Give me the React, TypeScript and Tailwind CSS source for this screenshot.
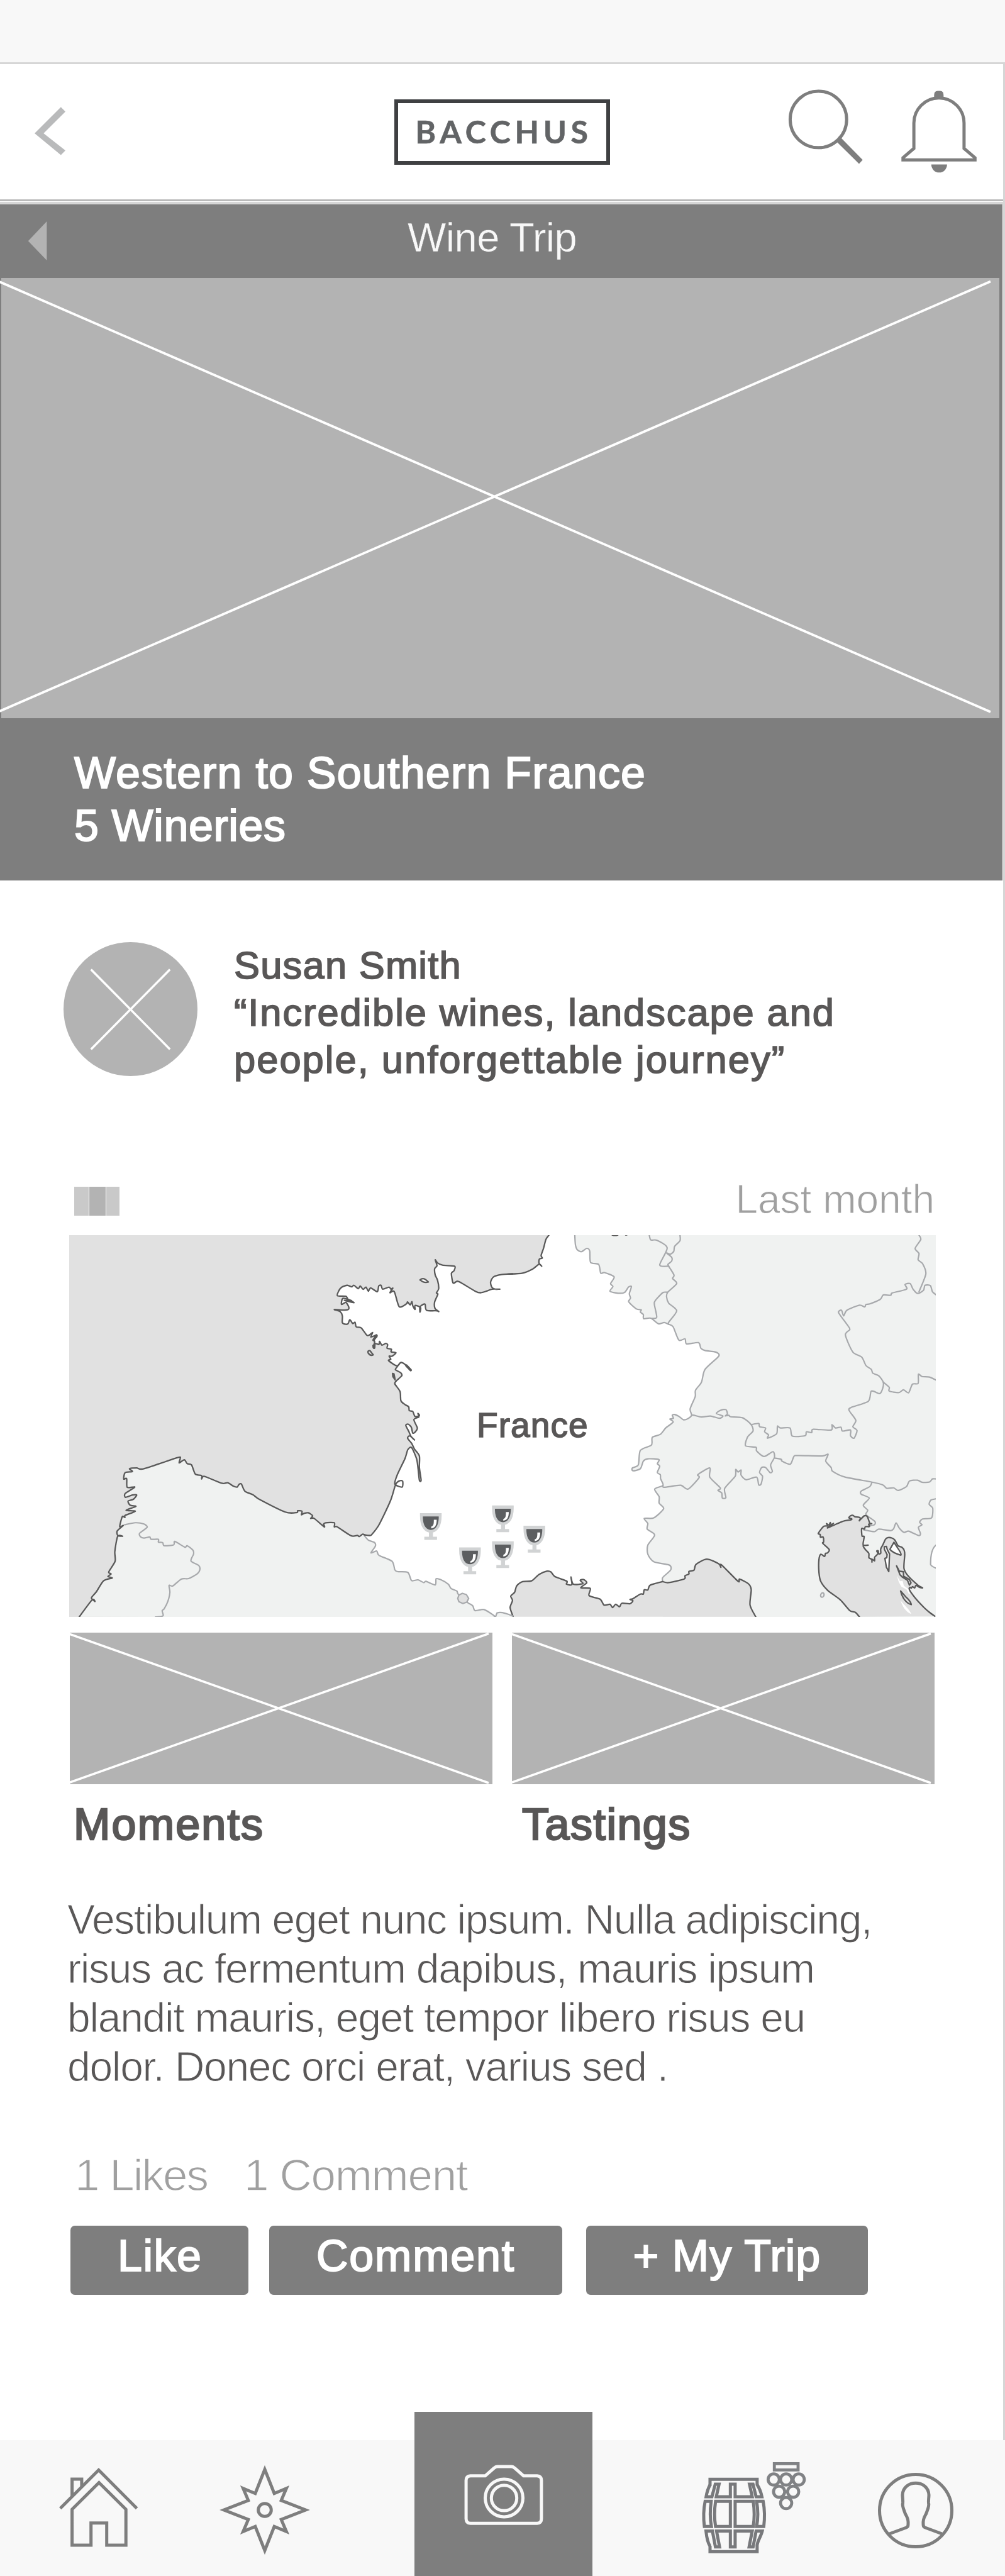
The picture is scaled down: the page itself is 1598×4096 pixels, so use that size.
import React from "react";

type Pts = string;

function parse(points: Pts): number[][] {
  return points
    .trim()
    .split(/\s+/)
    .map((p) => p.split(",").map(Number));
}

// Turns a list of points into a softly rounded path.
function curve(points: Pts, start = "M"): string {
  const p = parse(points);
  const t = 0.13;
  let d = `${start}${p[0][0]} ${p[0][1]}`;
  for (let i = 0; i < p.length - 1; i++) {
    const a = p[Math.max(i - 1, 0)];
    const b = p[i];
    const c = p[i + 1];
    const e = p[Math.min(i + 2, p.length - 1)];
    d += `C${(b[0] + (c[0] - a[0]) * t).toFixed(1)} ${(b[1] + (c[1] - a[1]) * t).toFixed(1)} ${(c[0] - (e[0] - b[0]) * t).toFixed(1)} ${(c[1] - (e[1] - b[1]) * t).toFixed(1)} ${c[0]} ${c[1]}`;
  }
  return d;
}

const ATLANTIC_FRANCE =
  "1568,180 1530,183 1502,192 1492,212 1496,232 1508,240 1524,240 1497,240 1480,247 1458,254 1440,249 1390,215 1376,209 1362,216 1356,178 1365,168 1367,150 1325,146 1308,137 1300,125 1306,148 1298,160 1300,185 1308,205 1312,238 1304,255 1309,260 1298,290 1299,315 1312,328 1306,325 1270,323 1265,300 1258,300 1247,310 1247,330 1249,312 1230,304 1230,320 1222,305 1219,289 1213,302 1204,290 1200,298 1175,309 1158,250 1143,254 1153,236 1146,240 1140,232 1118,240 1112,225 1104,228 1099,250 1076,235 1068,248 1060,232 1050,241 1040,228 1033,238 1018,225 1010,231 995,225 975,233 965,248 961,266 990,268 998,280 1018,293 985,284 1010,285 980,276 975,300 990,292 1000,310 998,320 980,322 950,320 970,328 978,345 978,372 990,378 998,375 1004,360 1014,375 1022,370 1026,388 1043,392 1062,420 1070,421 1083,410 1077,428 1096,420 1097,428 1087,437 1090,448 1085,468 1090,470 1092,454 1105,457 1107,445 1115,460 1128,453 1135,458 1133,472 1148,476 1147,486 1164,490 1150,503 1140,503 1146,515 1138,520 1160,538 1170,540 1182,528 1198,538 1215,558 1195,535 1180,528 1168,545 1162,556 1180,568 1184,580 1165,600 1160,612 1178,642 1181,678 1195,693 1208,702 1210,717 1222,720 1230,740 1245,736 1240,728 1243,742 1226,752 1238,785 1231,800 1222,805 1217,782 1206,770 1198,775 1208,798 1216,818 1228,832 1212,816 1204,825 1218,845 1228,868 1245,895 1245,940 1251,990 1245,990 1240,940 1235,905 1218,862 1205,870 1195,905 1168,970 1160,1005 1185,1017 1187,994 1177,992 1163,1006 1145,1070 1105,1165 1080,1203 1072,1207 1054,1204";
const BAY_SPAIN =
  "1054,1204 1048,1202 1037,1211 1030,1207 1008,1208 960,1173 950,1173 950,1157 920,1157 913,1162 915,1173 880,1140 868,1140 875,1130 860,1118 845,1120 836,1126 838,1112 823,1110 820,1117 780,1115 690,1065 668,1047 640,1033 628,1005 620,1006 613,1017 600,1013 580,1000 560,1002 500,975 490,985 490,972 468,966 455,930 440,925 430,910 412,922 416,903 405,902 290,945 265,942 240,945 250,956 225,960 220,985 230,984 232,1018 258,1017 225,1042 226,1057 250,1048 265,1048 253,1065 235,1072 242,1088 262,1093 228,1108 260,1112 225,1128 224,1136 215,1133 206,1172 218,1168 197,1190 200,1208 216,1210 199,1210 189,1270 190,1308 168,1350 176,1358 165,1368 180,1374 150,1385 125,1428 108,1452 120,1466 110,1460 66,1526";
const PYRENEES =
  "1054,1207 1068,1225 1090,1235 1092,1250 1077,1275 1097,1268 1105,1285 1150,1308 1160,1342 1170,1349 1205,1352 1218,1384 1240,1381 1260,1392 1268,1387 1300,1401 1303,1377 1318,1380 1345,1398 1355,1415 1375,1425 1380,1438 1412,1470 1430,1483 1438,1502 1470,1498 1510,1526";
const PORTUGAL =
  "222,1165 260,1157 290,1162 301,1175 275,1198 278,1212 290,1217 310,1213 315,1222 340,1222 340,1233 355,1235 360,1247 393,1244 397,1230 432,1253 440,1247 460,1265 462,1280 453,1307 480,1325 484,1340 475,1357 445,1376 420,1378 390,1405 377,1403 380,1430 373,1465 360,1495 353,1502 357,1520 350,1525 330,1527";
const CHANNEL =
  "198,28 188,45 180,80 172,108 176,118 166,122 165,138 174,150 165,142 145,160 110,177 60,181";
const EAST_BORDER =
  "285,28 287,65 293,85 307,93 325,80 335,90 338,135 365,143 372,177 385,175 417,192 405,218 413,230 403,248 430,256 452,253 465,232 475,230 468,258 472,275 466,290 492,318 508,321 505,330 515,340 516,356 540,354 566,376 585,371 600,378 615,388 634,440 655,435 660,455 700,450 708,472 722,481 758,487 768,503 722,555 710,605 690,637 689,662 672,710 677,735 665,748 650,753 635,740 620,732 612,735 616,747 604,750 615,762 590,785 572,810 545,822 542,852 505,873 498,930 478,942 480,953 505,945 515,915 530,906 567,909 562,925 570,935 562,960 572,968 573,985 581,1010 553,1025 568,1055 568,1080 583,1102 550,1138 518,1140 530,1160 528,1182 553,1205 530,1245 530,1280 550,1310 600,1322 608,1332 605,1345 580,1372 580,1388";
const MED =
  "580,1388 538,1402 530,1421 518,1420 515,1437 505,1437 480,1455 470,1458 480,1463 470,1475 443,1473 435,1487 422,1477 412,1490 403,1477 383,1480 370,1457 333,1443 337,1415 305,1412 325,1393 315,1380 303,1383 312,1396 280,1398 272,1370 275,1400 257,1398 258,1386 218,1368 205,1350 192,1347 165,1360 140,1385 110,1388 90,1405 83,1430 70,1445 76,1462 68,1490 78,1526";
const LIGURIA =
  "580,1388 600,1392 652,1378 655,1365 668,1358 668,1348 685,1343 692,1320 728,1300 768,1318 775,1332 777,1322 833,1387 838,1378 868,1397 877,1420 873,1480 892,1526";
const BORDERS = [
  "677,735 685,735 710,742 740,738 770,747 782,738 760,728 775,715 792,713 797,730 790,738 802,735 808,741 848,745 877,772 883,797 865,820 858,855 893,861 895,875 920,897 950,878 955,900 942,930 948,955 940,960 925,940 912,940 905,960 915,975 910,1005 902,1008 895,978 860,988 843,970 843,950 833,958 825,948 823,975 788,1022 792,1058 780,1060 778,1040 765,1030 773,1020 738,978 738,942 698,968 702,980 665,1025 640,1010 585,1018 581,1010",
  "877,772 902,767 905,780 925,785 922,800 935,812 932,825 962,808 965,778 975,785 1007,785 1015,817 1058,815 1062,800 1080,803 1085,790 1145,793 1148,772 1160,785 1178,782 1183,797 1210,793 1210,815 1222,825 1232,795 1218,780 1228,755 1205,715 1215,703 1270,680 1280,640 1308,650 1318,630 1320,605 1305,580 1285,570 1280,555 1262,540 1248,507 1218,487 1193,420 1208,398 1198,378 1170,332 1180,323 1187,345 1198,323 1240,303 1258,310 1262,300 1275,298 1310,280 1320,263 1345,264 1350,255 1398,240 1393,222 1410,218 1420,240 1435,257 1455,245 1460,225 1478,226 1485,250 1497,262",
  "1440,28 1446,45 1427,80 1440,100 1437,125 1452,140 1463,180 1440,250",
  "1320,605 1340,625 1340,640 1372,646 1388,635 1405,647 1418,613 1437,610 1438,574 1450,583 1475,585 1497,597",
  "955,903 978,908 980,915 1008,927 1020,897 1032,893 1115,895 1135,888 1127,915 1145,940 1150,955 1190,977 1280,997 1318,1008 1332,1022 1355,1020 1370,1030 1398,1015 1408,993 1435,990 1450,998 1475,997 1485,985 1497,985",
  "1282,998 1275,1015 1246,1033 1246,1045 1273,1060 1253,1088 1268,1108 1262,1125 1292,1152 1290,1165 1275,1168",
  "1255,1185 1290,1192 1305,1182 1345,1188 1355,1180 1363,1158 1375,1180 1390,1195 1405,1190 1438,1207 1445,1200 1438,1175 1450,1165 1442,1155 1452,1142 1482,1138 1486,1100 1474,1085 1480,1068 1497,1063",
  "535,28 540,47 560,48 595,78 570,145 600,150",
  "638,28 638,50 620,72 617,92 605,103 593,98 610,115 610,130 598,142 600,150 618,185 613,198 627,218 597,252 593,270 600,295 627,325 600,370 600,378",
  "595,252 580,254 555,285 552,300 560,350 545,355",
];
const ADRIATIC =
  "482,935 450,900 405,885 330,800 230,725 175,655 160,580 160,480 175,437 205,455 212,430 228,427 242,400 190,350 197,340 193,300 172,302 170,280 155,270 198,215 230,212 220,193 240,205 250,185 258,203 275,192 228,228 345,177 415,163 420,155 398,148 410,132 430,127 445,138 480,143 490,152 482,170 520,132 545,138 565,190 580,193 556,198 562,217 530,218 522,237 500,233 503,292 520,297 512,362 552,365 512,370 530,400 557,430 558,465 580,478 582,500 584,478 603,490 604,460 630,433 620,412 632,410 635,433 652,430 652,395 670,360 690,317 710,305 740,308 765,325 790,370 820,382 838,405 843,440 837,550 870,610 950,685 985,705 960,700 932,685 922,705 905,695 895,708 885,700 880,720 930,790 1000,865 1040,900 1082,930";

const dark = {
  fill: "none",
  stroke: "#595959",
  strokeWidth: 2.3,
  strokeLinejoin: "round" as const,
  strokeLinecap: "round" as const,
  vectorEffect: "non-scaling-stroke" as const,
};
const soft = { ...dark, stroke: "#a7a9ac", strokeWidth: 2.2 };

function Glass({ x, y }: { x: number; y: number }) {
  return (
    <g transform={`translate(${x} ${y}) scale(.45858 .40507)`}>
      <path d="M0 0H75V12C75 50 62 72 45 76V93H59V105H15V93H31V76C12 72 0 48 0 12Z" fill="#d1d3d4" />
      <path d="M10 13H65V20C64 48 54 66 38 66C21 66 11 48 10 20Z" fill="#5c5e60" />
      <path d="M48 26H58C58 48 52 58 39 60V53C47 50 48 44 48 26Z" fill="#fff" />
    </g>
  );
}

function FranceMap() {
  const rev = (s: string) => s.trim().split(/\s+/).reverse().join(" ");
  return (
    <svg className="block h-[607px] w-[1378px]" viewBox="0 0 1378 607">
      <rect width="1378" height="607" fill="#e1e1e1" />
      <g transform="translate(-14.1 -11.4) scale(.45858 .40507)">
        <path d={curve(ATLANTIC_FRANCE) + curve(PYRENEES, "L") + "L1580 1530V180Z"} fill="#fff" />
        <path d={curve(BAY_SPAIN) + "L1510 1530" + curve(rev(PYRENEES), "L") + "Z"} fill="#f0f2f1" />
      </g>
      <g transform="translate(668.9 -11.4) scale(.47387 .40507)">
        <path d="M285 28H1500V1530H285Z" fill="#f0f2f1" />
        <path d={curve(rev(CHANNEL)) + curve(EAST_BORDER, "L") + "L580 1530H60Z"} fill="#fff" />
        <path d={curve(rev(MED)) + curve(LIGURIA, "L") + "Z"} fill="#e1e1e1" />
        {BORDERS.map((b, i) => (
          <path key={i} d={curve(b)} {...soft} />
        ))}
        <path d={curve(EAST_BORDER)} {...soft} />
        <path d={curve(CHANNEL)} {...dark} />
        <path d={curve(MED)} {...dark} />
        <path d={curve(LIGURIA)} {...dark} />
        <path d="M410 28Q420 32 430 28M455 28H460" {...dark} strokeWidth={1.5} />
      </g>
      <g transform="translate(-14.1 -11.4) scale(.45858 .40507)">
        <path d={curve(PYRENEES)} {...soft} />
        <path d={curve(PORTUGAL)} {...soft} />
        <path d="M1505 1526L1510 1524L1514 1511Q1530 1504 1568 1523L1570 1530H1510Z" {...soft} fill="#f0f2f1" />
        <path d="M1378 1454L1382 1441L1394 1434L1408 1439L1416 1454L1410 1468L1396 1474L1382 1467Z" {...soft} fill="#e1e1e1" />
        <path d={curve(ATLANTIC_FRANCE)} {...dark} />
        <path d={curve(BAY_SPAIN)} {...dark} />
        <path d="M1247 204Q1255 195 1266 202L1276 212Q1262 218 1247 204Z" {...dark} fill="#fff" />
        <path d="M1067 484Q1073 477 1078 488L1085 498Q1075 504 1067 490Z" {...dark} />
        <path d="M1152 571L1157 573L1161 596L1153 583Z" {...dark} fill="#595959" />
        <path d="M1086 440L1096 422M1086 462L1088 470M1200 540L1215 558" {...dark} strokeWidth={4} />
      </g>
      <g transform="translate(1160.2 420) scale(.19973)">
        <path d={curve(ADRIATIC) + "Z"} fill="#e1e1e1" />
        <path d={curve(ADRIATIC)} {...dark} />
        <path d="M680 377L697 375L705 403L722 435L716 575L697 540L685 470L700 465L703 440L681 398Z" {...dark} fill="#fff" />
        <path d="M757 342L725 398Q745 425 812 445Q820 440 800 408Z" {...dark} fill="#fff" />
        <path d="M778 530L800 572L832 577L834 612L880 638L893 665L880 683L865 645L825 620L805 600Z" {...dark} fill="#e8e8e8" />
        <path d="M779 605L805 652L826 650L836 688L872 715L887 755L875 752L858 718L816 695L796 660Z" fill="#fff" />
        <path d="M810 730C820 780 855 828 895 838Q890 810 850 775Z" {...dark} />
        <path d="M810 805C825 855 850 895 896 914C880 875 840 845 810 805Z" fill="#fff" />
        <ellipse cx="187" cy="762" rx="13" ry="18" transform="rotate(20 187 762)" {...soft} />
        <path d="M1092 365C1065 385 1048 430 1049 520Q1055 533 1092 548" {...soft} fill="#fff" />
      </g>
      <Glass x={557.8} y={441.9} />
      <Glass x={620.1} y={496.6} />
      <Glass x={672.4} y={429.7} />
      <Glass x={672.4} y={486.8} />
      <Glass x={722.4} y={462.1} />
    </svg>
  );
}

function ImageBox() {
  return (
    <div className="h-[241px] w-[672px] bg-[#b3b3b3]">
      <svg className="block" width="672" height="241" viewBox="0 0 672 241" stroke="#fff" strokeWidth="3.6">
        <path d="M-1 2L666 239M-1 238.5L666 1.5" />
      </svg>
    </div>
  );
}

const actions = [
  { label: "Like", cls: "w-[283px] pl-[75px] tracking-[1.5px]" },
  { label: "Comment", cls: "ml-[33px] w-[466px] pl-[75px] tracking-[1.8px]" },
  { label: "+ My Trip", cls: "ml-[37.5px] w-[448.5px] pl-[75px] tracking-[1px]" },
];

function Header() {
  return (
    <header className="flex h-[215px] w-full bg-white">
      <svg className="ml-[54px] mt-[67px] shrink-0" width="52" height="79" viewBox="54 169 52 79" fill="#b9babb">
        <path d="M96.8 170.2L104 177.4L69.3 212L104 239.3L96.8 246.6L55 212Z" />
      </svg>
      <div className="ml-[521px] mt-[56px] flex h-[104px] w-[343px] shrink-0 justify-center border-[6px] border-[#3f4042] pt-[17px] font-[Lato] text-[50px] font-bold leading-[56px] tracking-[6.7px] text-[#626466] [-webkit-text-stroke:0.6px_#626466]">
        <span className="pl-[5px]">BACCHUS</span>
      </div>
      <svg className="ml-[280px] mt-[38px] shrink-0" width="310" height="140" viewBox="1250 140 310 140">
        <circle cx="1301.3" cy="189.9" r="44.9" fill="none" stroke="#7e7e7e" strokeWidth="5" />
        <path d="M1334 217L1338.1 220.1L1371.7 254.2L1365.9 260.4L1331.7 226.7L1330 222Z" fill="#7e7e7e" />
        <path
          d="M1435.8 254.2V250.8L1453.1 236V195.7A39.9 39.9 0 0 1 1532.9 195.7V236L1550.3 250.8V254.2Z"
          fill="none"
          stroke="#7e7e7e"
          strokeWidth="5"
        />
        <path d="M1485.3 156V151Q1485.3 144.4 1491 144.4H1495Q1500.3 144.4 1500.3 151V156Z" fill="#7e7e7e" />
        <path d="M1480.8 261.6H1505.9A12.55 12.8 0 0 1 1480.8 261.6Z" fill="#7e7e7e" />
      </svg>
    </header>
  );
}

function BottomBar() {
  return (
    <nav className="flex h-[216px] w-full items-start bg-[#f8f8f8]">
      <svg className="ml-[90px] mt-[40px] shrink-0" width="135" height="134" viewBox="90 3920 135 134" fill="none" stroke="#7e7e7e" strokeWidth="5">
        <path d="M95.8 3988.5L156.9 3927.6L217.6 3988.5" />
        <path d="M114.6 3969V3942H129.9V3955" />
        <path d="M157.4 3947.5L200.2 3990V4047H169.7V4011.8H144.7V4047H114.6V3990Z" />
      </svg>
      <svg className="ml-[121px] mt-[35px] shrink-0" width="150" height="152" viewBox="-75 -76 150 152" fill="none" stroke="#7e7e7e" strokeWidth="5" strokeMiterlimit="12">
        <path d="M0 -64.5L15.1 -26.3L34.4 -34.4L26.2 -15.2L65 0L26.2 15.2L34.4 34.4L15.1 26.3L0 64.5L-15.1 26.3L-34.4 34.4L-26.2 15.2L-65 0L-26.2 -15.2L-34.4 -34.4L-15.1 -26.3Z" />
        <circle r="10.3" />
      </svg>
      <div className="-mt-[45px] ml-[163px] flex h-[261px] w-[283px] shrink-0 justify-center bg-[#7e7e7e] pt-[82px]">
        <svg width="130" height="100" viewBox="734 3917 130 100" fill="none" stroke="#f8f8f8" strokeWidth="5">
          <path d="M746 3936.8H769.5L783.5 3924.5Q786 3921.9 789 3921.9H811Q814 3921.9 816.5 3924.5L830.5 3936.8H852Q858.9 3937.3 858.9 3944V4005Q858.9 4011.8 852 4012.3H746Q739.1 4011.8 739.1 4005V3944Q739.1 3937.3 746 3936.8Z" />
          <circle cx="799.5" cy="3971.9" r="30" />
          <circle cx="799.5" cy="3971.9" r="20.2" />
        </svg>
      </div>
      <svg className="ml-[166.5px] mt-[21px] shrink-0" width="179.75" height="179.75" viewBox="0 0 900 900" fill="none" stroke="#78797c" strokeWidth="25">
        <path d="M100 256V207H475V252" />
        <path d="M103 246C86 275 75 310 69 345H115L142 245H172L150 345H262V245H300V345H436L414 245H442L467 345H513C506 310 492 275 473 246" />
        <path d="M61 382H109C98 460 100 520 111 582H55C46 510 47 450 61 382Z" />
        <path d="M144 382H262V582H144C134 520 134 450 144 382Z" />
        <path d="M300 382H444C454 450 454 520 444 582H300Z" />
        <path d="M471 382H523C536 450 537 510 528 582H471C483 520 483 450 471 382Z" />
        <path d="M100 736V782H475V735C475 700 505 665 516 618H467L443 745H411L436 618H300V745H262V618H152L176 745H143L119 618H68C75 690 85 715 100 740" />
        <g stroke="#808285" strokeWidth="24">
          <rect x="612" y="82" width="189" height="50" />
          <circle cx="607" cy="208" r="44.5" />
          <circle cx="706" cy="208" r="44.5" />
          <circle cx="806" cy="208" r="44.5" />
          <circle cx="650" cy="305" r="44.5" />
          <circle cx="762" cy="305" r="44.5" />
          <circle cx="706" cy="396" r="44.5" />
        </g>
      </svg>
      <svg className="ml-[105px] mt-[49px] shrink-0" width="126" height="126" viewBox="-63 -63 126 126" fill="none" stroke="#7e7e7e" strokeWidth="5">
        <circle r="57.5" />
        <path d="M-42 37L-15 27Q-12 26 -12 22C-11 12 -15 9 -17 4C-18 0 -22 -7 -20.5 -12C-20 -16 -21 -20 -21 -25C-20 -50 20 -50 21 -25C21 -20 20 -16 20.5 -12C22 -7 18 0 17 4C15 9 11 12 12 22Q12 26 15 27L42 37" />
      </svg>
    </nav>
  );
}

export default function App() {
  return (
    <div className="flex h-[4096px] w-[1598px] flex-col overflow-hidden bg-white font-['Liberation_Sans',Arial,sans-serif]">
      <div className="h-[102px] w-full shrink-0 border-b-[3px] border-[#d6d6d6] bg-[#f8f8f8]" />
      <div className="flex h-[3778px] w-full shrink-0 flex-col border-r-[3px] border-[#d6d6d6]">
        <Header />
        <div className="h-[3px] shrink-0 bg-[#b9b9b9]" />
        <div className="mt-[1px] h-[4px] shrink-0 bg-[#d6d6d6]" />
        <div className="flex h-[117px] w-[1594px] shrink-0 bg-[#7e7e7e]">
          <svg className="ml-[44px] mt-[27px] shrink-0" width="31" height="63" viewBox="0 0 31 63" fill="#b3b3b3">
            <path d="M.8 31.3L30.4 0V62.1Z" />
          </svg>
          <div className="ml-[573px] mt-[20px] whitespace-nowrap text-[65px] leading-none tracking-[-0.6px] text-[#f8f8f8] [-webkit-text-stroke:0.5px_#7e7e7e]">Wine Trip</div>
        </div>
        <div className="h-[700px] w-[1594px] shrink-0 border-l-2 border-r-[5px] border-[#7e7e7e] bg-[#b3b3b3]">
          <svg className="-ml-[2px] block" width="1589" height="700" viewBox="0 0 1589 700" stroke="#fff" strokeWidth="3.8">
            <path d="M-1 6L1575 690M-1 689L1575 5.5" />
          </svg>
        </div>
        <div className="h-[258px] w-[1594px] shrink-0 whitespace-nowrap bg-[#7e7e7e] pl-[118px] pt-[45px] text-[70px] leading-[84px] text-white [-webkit-text-stroke:2px_#ffffff]">
          <div className="tracking-[1.2px]">Western to Southern France</div>
          <div className="tracking-[0.6px]">5 Wineries</div>
        </div>
        <section className="mt-[98px] flex h-[225px] shrink-0 pl-[101px]">
          <div className="h-[213px] w-[213px] shrink-0 rounded-full bg-[#b3b3b3]">
            <svg width="213" height="213" viewBox="0 0 213 213" stroke="#fff" strokeWidth="3.5">
              <path d="M43.7 43.5L169.2 170.5M169.2 43.5L43.7 170.5" />
            </svg>
          </div>
          <div className="ml-[58px] whitespace-nowrap text-[61.5px] leading-[74.8px] text-[#595757] [-webkit-text-stroke:1.7px_#595757]">
            <div className="tracking-[1.2px]">Susan Smith</div>
            <div className="tracking-[1.88px]">“Incredible wines, landscape and</div>
            <div className="tracking-[2px]">people, unforgettable journey”</div>
          </div>
        </section>
        <div className="mt-[152px] flex h-[63px] shrink-0 justify-between pl-[118px] pr-[109px]">
          <div className="mt-[12px] flex h-[46px] w-[72px] gap-px">
            <div className="w-[23px] bg-[#c9c9c9]" />
            <div className="w-[26px] bg-[#b3b3b3]" />
            <div className="w-[21px] bg-[#c9c9c9]" />
          </div>
          <div className="text-[64px] leading-none text-[#a0a0a0] [-webkit-text-stroke:1px_#ffffff]">Last month</div>
        </div>
        <div className="relative ml-[110px] mt-[26px] h-[607px] w-[1378px] shrink-0">
          <FranceMap />
          <div className="absolute left-[648px] top-[275px] text-[55px] leading-none tracking-[1.1px] text-[#595757] [-webkit-text-stroke:1.6px_#595757]">France</div>
        </div>
        <div className="ml-[111px] mt-[25px] flex shrink-0 gap-[31px]">
          <figure className="w-[672px]">
            <ImageBox />
            <figcaption className="ml-[6px] mt-[29px] text-[70px] leading-none tracking-[2.2px] text-[#595757] [-webkit-text-stroke:2.6px_#595757]">Moments</figcaption>
          </figure>
          <figure className="w-[672px]">
            <ImageBox />
            <figcaption className="ml-[16px] mt-[29px] text-[70px] leading-none tracking-[1.5px] text-[#595757] [-webkit-text-stroke:2.6px_#595757]">Tastings</figcaption>
          </figure>
        </div>
        <div className="ml-[107px] mt-[78px] h-[312px] shrink-0 whitespace-nowrap text-[66px] leading-[77.9px] tracking-[-1.3px] text-[#595757] [-webkit-text-stroke:1.1px_#ffffff]">
          <div className="tracking-[-1.42px]">Vestibulum eget nunc ipsum. Nulla adipiscing,</div>
          <div>risus ac fermentum dapibus, mauris ipsum</div>
          <div>blandit mauris, eget tempor libero risus eu</div>
          <div>dolor. Donec orci erat, varius sed .</div>
        </div>
        <div className="mt-[97px] flex h-[70px] shrink-0 pl-[119px] text-[71px] leading-none text-[#a0a0a0] [-webkit-text-stroke:1.3px_#ffffff]">
          <div className="w-[269px] whitespace-nowrap tracking-[-2px]">1 Likes</div>
          <div className="whitespace-nowrap tracking-[-1.3px]">1 Comment</div>
        </div>
        <div className="ml-[112px] mt-[46px] flex shrink-0">
          {actions.map((a) => (
            <button
              key={a.label}
              className={`h-[110px] shrink-0 whitespace-nowrap rounded-[7px] bg-[#7e7e7e] pb-[15px] text-left text-[70px] leading-none text-white [-webkit-text-stroke:2px_#ffffff] ${a.cls}`}
            >
              {a.label}
            </button>
          ))}
        </div>
      </div>
      <BottomBar />
    </div>
  );
}
